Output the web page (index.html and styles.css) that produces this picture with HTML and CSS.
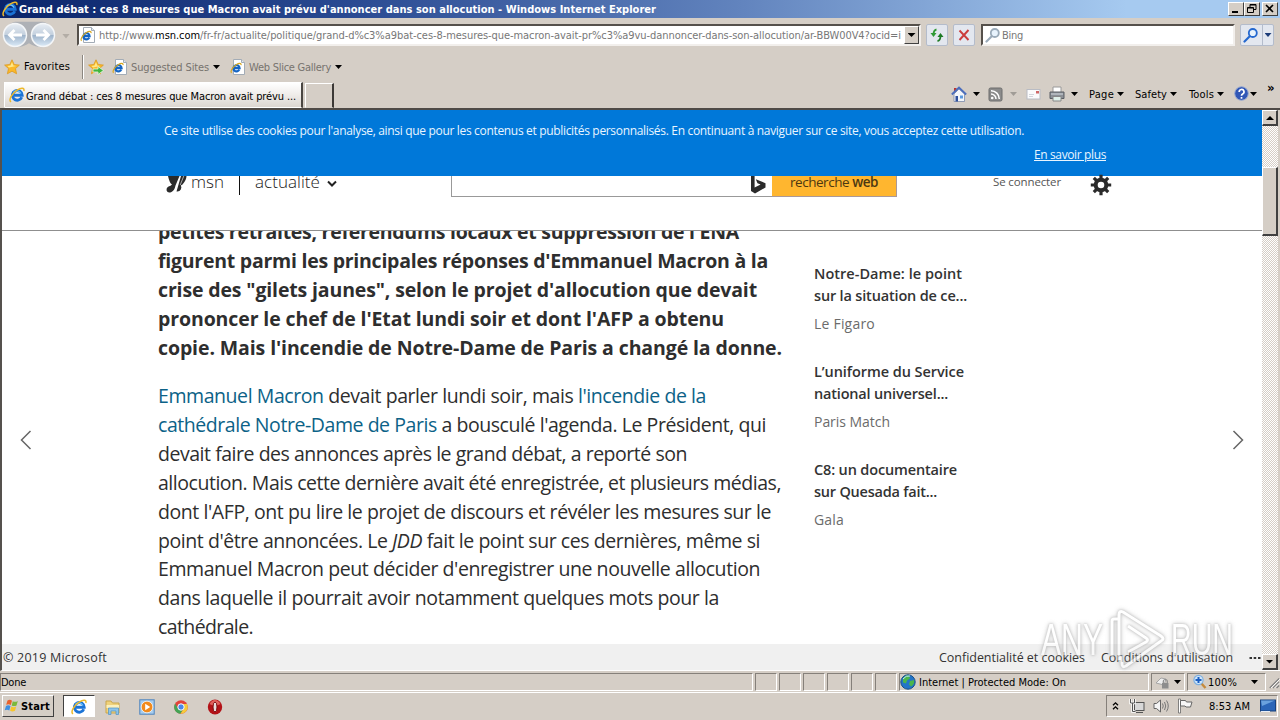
FILE: index.html
```html
<!DOCTYPE html>
<html lang="fr">
<head>
<meta charset="utf-8">
<title>Grand débat : ces 8 mesures que Macron avait prévu d'annoncer dans son allocution</title>
<link rel="stylesheet" href="styles.css">
</head>
<body>
<svg class="defs" aria-hidden="true">
  <defs>
    <symbol id="ie" viewBox="0 0 16 16">
      <path d="M12.8 10.3A4.900 4.900 0 1 1 13.200 8.300H5" fill="none" stroke="#1b73d6" stroke-width="2.900"/>
      <path d="M12 6.400A4.400 4.400 0 0 0 4.400 5.600" fill="none" stroke="#6cc4fa" stroke-width="1.300"/>
      <path d="M2 15C-.8 13 3 6 8.500 2.800 12 .5 15.800.3 14.800 4" fill="none" stroke="#edb92a" stroke-width="1.500"/>
    </symbol>
    <symbol id="iepage" viewBox="0 0 16 16">
      <path d="M3.500.5h8l3 3v12h-11z" fill="#fff" stroke="#a3acb6"/>
      <path d="M11.500.5v3h3" fill="#dfe8f2" stroke="#a3acb6"/>
      <path d="M9.300 10.600A3.100 3.100 0 1 1 9.600 9.200H4" fill="none" stroke="#1565c4" stroke-width="2.200"/>
      <path d="M1.500 13.800C0 12 3 7.500 6.500 5.500 9 4 11.500 4 11 6.200" fill="none" stroke="#d9a820" stroke-width="1.200"/>
    </symbol>
    <symbol id="star" viewBox="0 0 16 16">
      <path d="M8 .8l2.200 4.700 5.200.6-3.900 3.500 1.100 5.200L8 12.200l-4.600 2.600 1.100-5.200L.6 6.100l5.200-.6z" fill="#fbb829" stroke="#dc9a22" stroke-width=".8"/>
      <path d="M8 3l1.300 3.500 3 .5L5 8.500 3.500 7l3-.5z" fill="#ffe98a"/>
    </symbol>
    <symbol id="lens" viewBox="0 0 16 16">
      <path d="M6.500 9.500L1.500 14.500" stroke="currentColor" stroke-width="2.200" stroke-linecap="round"/>
      <circle cx="9.800" cy="6" r="4" fill="#e8f3fd" stroke="currentColor" stroke-width="1.800"/>
    </symbol>
    <linearGradient id="orb" x1="0" y1="0" x2="0" y2="1">
      <stop offset="0" stop-color="#e9eef4"/><stop offset=".48" stop-color="#c3d0de"/>
      <stop offset=".52" stop-color="#9fb4cb"/><stop offset="1" stop-color="#dcebf8"/>
    </linearGradient>
  </defs>
</svg>

<header class="titlebar">
  <svg class="i16"><use href="#ie"/></svg>
  <span class="title" data-w="637">Grand débat : ces 8 mesures que Macron avait prévu d'annoncer dans son allocution - Windows Internet Explorer</span>
  <div class="winbtns">
    <span class="wb"><svg viewBox="0 0 14 12"><path d="M3 9h6" stroke="#000" stroke-width="2"/></svg></span>
    <span class="wb"><svg viewBox="0 0 14 12"><path d="M5 4V1.500h6v5H9M5 2h6" fill="none" stroke="#000"/><path d="M2.500 4.500h6v5h-6zM2.500 5h6" fill="none" stroke="#000"/></svg></span>
    <span class="wb close"><svg viewBox="0 0 14 12"><path d="M3 2l7 7M10 2l-7 7" stroke="#000" stroke-width="1.600"/></svg></span>
  </div>
</header>

<nav class="navbar">
  <svg class="orbs" viewBox="0 0 56 28">
    <path d="M14 .8h28a13 13 0 0 1 0 25.500q-8 0-14-4-6 4-14 4A13 13 0 0 1 14 .8z" fill="#aeb1b6"/>
    <circle cx="14" cy="14" r="11.500" fill="url(#orb)" stroke="#f4f6f8" stroke-width="1.500"/>
    <circle cx="42" cy="14" r="11.500" fill="url(#orb)" stroke="#f4f6f8" stroke-width="1.500"/>
    <path d="M21 14H9M13.500 9l-5 5 5 5" fill="none" stroke="#fff" stroke-width="2.800"/>
    <path d="M35 14h12M42.500 9l5 5-5 5" fill="none" stroke="#fff" stroke-width="2.800"/>
  </svg>
  <i class="caret pale"></i>
  <div class="field address">
    <svg class="i16"><use href="#iepage"/></svg>
    <span class="url" data-w="802">http://www.<b>msn.com</b>/fr-fr/actualite/politique/grand-d%c3%a9bat-ces-8-mesures-que-macron-avait-pr%c3%a9vu-dannoncer-dans-son-allocution/ar-BBW00V4?ocid=i</span>
    <span class="drop"><i class="caret big"></i></span>
  </div>
  <span class="glass"><svg class="i16" viewBox="0 0 16 16"><path d="M7.500 2.500Q4.500 3 4.500 8" fill="none" stroke="#2f9a35" stroke-width="1.800"/><path d="M1.500 6h6l-3 4z" fill="#2f9a35"/><path d="M8.500 14Q11.500 13.500 11.500 9" fill="none" stroke="#1d7a24" stroke-width="1.800"/><path d="M8.500 10h6l-3-4z" fill="#1d7a24"/></svg></span>
  <span class="glass"><svg class="i16" viewBox="0 0 16 16"><path d="M3.500 3.500l9 9.500M12.500 3l-9 10" stroke="#cb3d3d" stroke-width="1.900"/></svg></span>
  <div class="field search">
    <svg class="i16 grey"><use href="#lens"/></svg>
    <span data-w="21">Bing</span>
  </div>
  <span class="glass go"><svg class="i16 blue"><use href="#lens"/></svg><span class="split"><i class="caret navy"></i></span></span>
</nav>

<nav class="favbar">
  <svg class="i16"><use href="#star"/></svg>
  <span class="fav" data-w="46">Favorites</span>
  <i class="sep"></i>
  <svg class="i16" viewBox="0 0 16 16"><use href="#star"/><path d="M5 10h5V7.500l5.500 4-5.500 4V13H5z" fill="#42b53e" stroke="#e7f7e0" stroke-width=".8"/></svg>
  <svg class="i16"><use href="#iepage"/></svg>
  <span class="dim" data-w="78">Suggested Sites</span><i class="caret"></i>
  <svg class="i16"><use href="#iepage"/></svg>
  <span class="dim" data-w="82">Web Slice Gallery</span><i class="caret"></i>
</nav>

<div class="tabrow">
  <div class="tab"><svg class="i16"><use href="#ie"/></svg><span data-w="270">Grand débat : ces 8 mesures que Macron avait prévu ...</span></div>
  <div class="newtab"></div>
  <div class="cmdbar">
    <svg class="i16" viewBox="0 0 16 16"><path d="M3 2h2.500v4H3z" fill="#b33"/><path d="M3 8v7.500h10.500V8L8 3z" fill="#f3f6fb" stroke="#7b8cab" stroke-width=".8"/><path d="M.8 8.500L8 1.500l7.200 7" fill="none" stroke="#4a6dbd" stroke-width="1.800"/><path d="M4.500 10h2.500v5.500H4.500z" fill="#2d4f9c"/><path d="M9 9.500h3v3H9z" fill="#5c9ade"/></svg>
    <i class="caret"></i>
    <svg class="i16" viewBox="0 0 16 16"><rect x="1" y="2" width="13" height="13" rx="1.500" fill="#8b8b8b" stroke="#6d6d6d"/><circle cx="4.200" cy="12" r="1.300" fill="#fff"/><path d="M3 8a5 5 0 0 1 5 5M3 4.700A8.300 8.300 0 0 1 11.300 13" fill="none" stroke="#fff" stroke-width="1.500"/></svg>
    <i class="caret pale"></i>
    <svg class="i16" viewBox="0 0 16 16"><rect x="1" y="3.500" width="13" height="9.500" fill="#fbfbfc" stroke="#b9bcc4"/><path d="M3 8.500h5M3 10.500h4" stroke="#d2d5dc"/><path d="M10 5h3v2.500h-3z" fill="#cf6767"/></svg>
    <svg class="i16" viewBox="0 0 16 16"><path d="M4 1h8v6H4z" fill="#fff" stroke="#999"/><path d="M1 6h14v6.500H1z" fill="#8b9097" stroke="#5a5e64"/><path d="M2 8h12" stroke="#d5dadf"/><path d="M4 10.500h8V15H4z" fill="#dff0ea" stroke="#888"/></svg>
    <i class="caret"></i>
    <span data-w="25">Page</span><i class="caret"></i>
    <span data-w="32">Safety</span><i class="caret"></i>
    <span data-w="25">Tools</span><i class="caret"></i>
    <svg class="i16" viewBox="0 0 16 16"><circle cx="7.500" cy="7.500" r="6.800" fill="#3157b6" stroke="#98a9d0"/><path d="M5.200 6a2.400 2.400 0 1 1 3.400 2q-1.100.6-1.100 1.700M7.500 11v1.800" fill="none" stroke="#fff" stroke-width="1.700"/></svg>
    <i class="caret"></i>
    <b class="more">»</b>
  </div>
</div>

<div class="viewport">
  <main class="page">
    <section class="cookie">
      <p><span data-w="860">Ce site utilise des cookies pour l'analyse, ainsi que pour les contenus et publicités personnalisés. En continuant à naviguer sur ce site, vous acceptez cette utilisation.</span></p>
      <p class="learn"><a data-w="72">En savoir plus</a></p>
    </section>
    <section class="msnbar">
      <svg class="butterfly" viewBox="0 0 22 18"><path d="M2 0h11.500L9.500 9.500Q8.500 14.500 5.500 16 1.500 17.500.6 14.500 0 11 4.500 9.800L6 8.500Q3.500 7 2 0z" fill="#2b2b2b"/><path d="M15 0h5.500Q20.500 4 16.500 8.500l-1.700 1Q16 11 14.800 13.500 13.500 16 10.500 15.500z" fill="#2b2b2b"/><path d="M17.800 0l-3.600 9" stroke="#fff" stroke-width=".6"/></svg>
      <span class="brand" data-w="33">msn</span>
      <i class="rule"></i>
      <span class="brand" data-w="65">actualité</span>
      <svg class="chev" viewBox="0 0 10 8"><path d="M1 1.500l4 4 4-4" fill="none" stroke="#222" stroke-width="2"/></svg>
      <div class="msnsearch"><svg viewBox="0 0 16 18"><path d="M1 0h3.600v11.500l6-3L7.500 7.200 5.800 3.200l9.700 4v4.300L5 17.500 1 15z" fill="#2b2b2b"/></svg></div>
      <div class="webbtn"><span data-w="88">recherche <b>web</b></span></div>
      <span class="signin" data-w="68">Se connecter</span>
      <svg class="gear" viewBox="0 0 22 22"><g fill="none" stroke="#2b2b2b"><circle cx="11" cy="11" r="5.300" stroke-width="4"/><path d="M11 .8v4M11 17.200v4M.8 11h4M17.200 11h4M3.800 3.800l2.800 2.800M15.400 15.400l2.800 2.800M3.800 18.200l2.800-2.800M15.400 6.600l2.800-2.800" stroke-width="3.200"/></g></svg>
    </section>
    <section class="body">
      <svg class="arrow" viewBox="0 0 12 20"><path d="M10.500 1L1.500 10l9 9" fill="none" stroke="#666" stroke-width="1.500"/></svg>
      <article>
        <p class="lead">
          <span data-w="581">petites retraites, référendums locaux et suppression de l'ENA</span>
          <span data-w="610">figurent parmi les principales réponses d'Emmanuel Macron à la</span>
          <span data-w="599">crise des "gilets jaunes", selon le projet d'allocution que devait</span>
          <span data-w="566">prononcer le chef de l'Etat lundi soir et dont l'AFP a obtenu</span>
          <span data-w="624">copie. Mais l'incendie de Notre-Dame de Paris a changé la donne.</span>
        </p>
        <p class="text">
          <span data-w="548"><a>Emmanuel Macron</a> devait parler lundi soir, mais <a>l'incendie de la</a></span>
          <span data-w="608"><a>cathédrale Notre-Dame de Paris</a> a bousculé l'agenda. Le Président, qui</span>
          <span data-w="529">devait faire des annonces après le grand débat, a reporté son</span>
          <span data-w="623">allocution. Mais cette dernière avait été enregistrée, et plusieurs médias,</span>
          <span data-w="613">dont l'AFP, ont pu lire le projet de discours et révéler les mesures sur le</span>
          <span data-w="602">point d'être annoncées. Le <em>JDD</em> fait le point sur ces dernières, même si</span>
          <span data-w="602">Emmanuel Macron peut décider d'enregistrer une nouvelle allocution</span>
          <span data-w="561">dans laquelle il pourrait avoir notamment quelques mots pour la</span>
          <span data-w="95">cathédrale.</span>
        </p>
      </article>
      <aside>
        <div class="story"><b data-w="148">Notre-Dame: le point</b><b data-w="153">sur la situation de ce...</b><small data-w="61">Le Figaro</small></div>
        <div class="story"><b data-w="150">L’uniforme du Service</b><b data-w="134">national universel...</b><small data-w="76">Paris Match</small></div>
        <div class="story"><b data-w="143">C8: un documentaire</b><b data-w="123">sur Quesada fait...</b><small data-w="30">Gala</small></div>
      </aside>
      <svg class="arrow" viewBox="0 0 12 20"><path d="M1.500 1l9 9-9 9" fill="none" stroke="#666" stroke-width="1.500"/></svg>
    </section>
    <footer class="pagefoot">
      <span data-w="104">© 2019 Microsoft</span>
      <span class="push" data-w="146">Confidentialité et cookies</span>
      <span data-w="132">Conditions d'utilisation</span>
      <svg class="dots" viewBox="0 0 12 4"><path d="M.5 2h2.500M4.700 2h2.500M9 2h2.500" stroke="#333" stroke-width="2.200"/></svg>
    </footer>
    <svg class="watermark" viewBox="0 0 200 70">
      <text x="5" y="49" textLength="62" lengthAdjust="spacingAndGlyphs">ANY</text><text x="135" y="49" textLength="62" lengthAdjust="spacingAndGlyphs">RUN</text>
      <path d="M76 50V15q0-2 2-2h4M83 54V9q0-5 4-3l38 24q4 3 0 5L90 60q-4 2-4-2v-8M92 20l18 12q3 2 0 4L92 46"/>
    </svg>
  </main>
  <div class="scroll">
    <span class="sbtn"><i class="caret big up"></i></span>
    <span class="thumb"></span>
    <span class="sbtn last"><i class="caret big"></i></span>
  </div>
</div>

<div class="status">
  <span class="cell"><span data-w="25">Done</span></span>
  <span class="cell"></span><span class="cell"></span><span class="cell"></span><span class="cell"></span><span class="cell"></span><span class="cell"></span>
  <span class="cell zone"><svg class="i16" viewBox="0 0 16 16"><circle cx="8" cy="8" r="7.200" fill="#2275c8" stroke="#1b5087"/><path d="M3 4q3-3.500 6-2.500l1 3-3 2-1 3-3-1zM10 7l4-1q1 4-3 6.500l-2-2z" fill="#4cb64a"/><path d="M3 5q3-4 7-3" stroke="#bfe6ff" fill="none"/></svg><span data-w="147">Internet | Protected Mode: On</span></span>
  <span class="cell lock"><svg class="i16" viewBox="0 0 16 16"><path d="M1 9l5-5 5 1-2 6z" fill="#eee" stroke="#a5a5a5"/><rect x="7" y="9" width="6.500" height="5.500" fill="#8d8d8d"/><path d="M8.300 9V7.500a2 2 0 0 1 4 0V9" fill="none" stroke="#8d8d8d" stroke-width="1.200"/></svg><i class="caret"></i></span>
  <span class="cell zoom"><svg class="i16" viewBox="0 0 16 16"><path d="M9 9l4.500 5" stroke="#c58a3c" stroke-width="2.400"/><circle cx="6.500" cy="6" r="4.600" fill="#cfe6fb" stroke="#7fb0e0" stroke-width="1.200"/><path d="M6.500 3v6M3.500 6h6" stroke="#1c5fc2" stroke-width="2"/></svg><span data-w="29">100%</span><i class="caret"></i></span>
  <svg class="grip" viewBox="0 0 14 16"><path d="M2 15L13 4M6 15l7-7M10 15l3-3" stroke="#808080" stroke-width="1.500"/><path d="M3.500 15L14 4.500M7.500 15L14 8.500" stroke="#fff"/></svg>
</div>

<div class="taskbar">
  <div class="start"><svg class="i16" viewBox="0 0 16 16"><path d="M3.500 2.500Q6 1 8 2.700L6.800 7Q4.700 5.600 2.200 6.800z" fill="#e8622c"/><path d="M8.800 3.200q2.200 1.400 5-.2L12.500 7.400q-2.400 1.300-4.800 0z" fill="#7cb93c"/><path d="M2 7.900q2.400-1.200 4.500.2L5.300 12.400Q3.200 11 .7 12.200z" fill="#3e8fe0"/><path d="M7.300 8.500q2.400 1.300 4.900 0L11 12.800q-2.600 1.300-4.900 0z" fill="#f6c52e"/></svg><b data-w="29">Start</b></div>
  <div class="task active"><svg class="i16"><use href="#ie"/></svg></div>
  <div class="task"><svg class="i16" viewBox="0 0 16 16"><path d="M1 2h5l1.500 2H14v10H1z" fill="#efd27c" stroke="#c9a64c"/><path d="M1.500 6h12.500v3H1.500z" fill="#fbf0bd"/><path d="M3.500 15.500V9h10v6.500h-2.500v-3.500H6v3.500z" fill="#8cc3ea" stroke="#4f93c6" stroke-width=".7"/></svg></div>
  <div class="task"><svg class="i16" viewBox="0 0 16 16"><rect x=".8" y=".8" width="14.400" height="14.400" fill="#a7cdef" stroke="#4d84bd"/><circle cx="8" cy="8" r="5.800" fill="#f18a1d" stroke="#fff" stroke-width=".7"/><path d="M6.200 4.800l5 3.200-5 3.200z" fill="#fff"/></svg></div>
  <div class="task"><svg class="i16" viewBox="0 0 16 16"><circle cx="8" cy="8" r="6.800" fill="#e2433a"/><path d="M2.100 4.600A6.800 6.800 0 0 0 7.500 14.800L10.500 9.500 5 9.500z" fill="#43a455"/><path d="M14 5H8l2.800 4.500-3.300 5.300A6.800 6.800 0 0 0 14 5z" fill="#f6cc3a"/><circle cx="8" cy="8" r="3.200" fill="#4b87ea" stroke="#fff" stroke-width="1"/></svg></div>
  <div class="task"><svg class="i16" viewBox="0 0 16 16"><ellipse cx="8" cy="8" rx="7.200" ry="7.400" fill="#b31217"/><path d="M2.500 5Q5 .8 8 1t5.500 4Q8 8 2.500 5z" fill="#e0605c"/><ellipse cx="8" cy="8" rx="2" ry="5" fill="#eadcdc" stroke="#7c0a0e"/></svg></div>
  <div class="tray">
    <svg class="hid" viewBox="0 0 7 10"><path d="M1 4.300l2.500-2.500L6 4.300M1 8.300l2.500-2.500L6 8.300" fill="none" stroke="#000" stroke-width="1.300"/></svg>
    <svg class="i16" viewBox="0 0 16 16"><rect x="5.500" y="4.500" width="9.500" height="8" fill="#d8d8d8" stroke="#555"/><path d="M7 14.500h7" stroke="#555"/><path d="M1.500 1v4h4V1M3.500 5v8.500h3" fill="none" stroke="#fff" stroke-width="2.400"/><path d="M1.500 1v4h4V1M3.500 5v8.500h3" fill="none" stroke="#555"/></svg>
    <svg class="i16" viewBox="0 0 16 16"><path d="M1 5.500h2.500L7.500 2v12L3.500 10.500H1z" fill="#f4f4f4" stroke="#666"/><path d="M9.500 5.500q1.500 2.500 0 5M11.500 4q2.500 4 0 8M13.500 2.500q3.500 5.500 0 11" fill="none" stroke="#777"/></svg>
    <svg class="i16" viewBox="0 0 16 16"><path d="M1.500 1h2v14h-2z" fill="#fff" stroke="#666" stroke-width=".8"/><path d="M3.500 2.500h5l1 1.500h5.500l-1.500 5H9L8 8H3.500z" fill="#f7f7f7" stroke="#666"/></svg>
    <span data-w="41">8:53 AM</span>
    <svg class="i16" viewBox="0 0 16 16"><rect x=".5" y="2" width="15" height="11" fill="#2b66b8" stroke="#17427f"/><path d="M1 2.500h14L2 8z" fill="#6aa2de"/><path d="M1 13.500h9" stroke="#e9eef5"/></svg>
  </div>
</div>
<script src="fit.js"></script>
</body>
</html>
```
FILE: styles.css
```css
* { box-sizing: border-box; }
body {
  margin: 0; width: 1280px; height: 720px; overflow: hidden;
  display: flex; flex-direction: column;
  background: #d5cec6; color: #000;
  font: 11px/14px "DejaVu Sans Condensed", "DejaVu Sans", sans-serif;
}
p { margin: 0; }
[data-w] { white-space: nowrap; flex: none; }
.defs { position: absolute; width: 0; height: 0; }
.i16 { width: 16px; height: 16px; flex: none; display: block; }
.caret {
  display: block; flex: none; width: 7px; height: 4px; background: #000;
  clip-path: polygon(0 0, 100% 0, 50% 100%);
}
.caret.big { width: 8px; height: 4px; }
.caret.up { transform: rotate(180deg); }
.caret.pale { background: #a09c96; }
.caret.navy { background: #1d3c78; }

/* Window title */
.titlebar {
  height: 18px; flex: none; display: flex; align-items: center; padding: 0 2px;
  background: linear-gradient(90deg, #0a246a 0%, #2b4b93 28%, #6284be 58%, #a6caf0 88%, #a6caf0 100%);
}
.title { color: #fff; font-weight: bold; margin-left: 1px; padding-top: 1px; }
.winbtns { margin-left: auto; display: flex; }
.wb {
  width: 16px; height: 14px; background: #d5cec6; border: 1px solid;
  border-color: #fff #404040 #404040 #fff;
}
.wb svg { width: 14px; height: 12px; display: block; }
.wb.close { margin-left: 2px; }

/* Navigation row */
.navbar { height: 36px; flex: none; display: flex; align-items: center; padding: 0 5px 2px 1px; }
.orbs { width: 56px; height: 28px; flex: none; }
.navbar > .caret.pale { width: 8px; height: 5px; margin: 2px 7px 0 5px; background: #b3ada6; }
.field {
  height: 22px; background: #fff; border: 2px solid;
  border-color: #55504b #f2efec #f2efec #55504b; display: flex; align-items: center; color: #777;
}
.address { width: 844px; padding-left: 1px; }
.url { margin-left: 3px; padding-top: 2px; }
.url b { font-weight: normal; color: #000; }
.drop {
  width: 15px; height: 18px; margin-left: auto; background: #d5cec6; border: 1px solid;
  border-color: #fff #404040 #404040 #fff; display: grid; place-items: center;
}
.glass {
  width: 22px; height: 22px; margin-left: 5px; border: 1px solid #b4bccb; border-radius: 2px;
  background: #e3e7ef; display: flex; align-items: center; justify-content: center; flex: none;
}
.search { width: 254px; margin-left: 6px; padding-left: 2px; }
.search span { margin-left: 1px; padding-top: 2px; }
.grey { color: #9aaab9; }
.blue { color: #2468cf; }
.go { width: 34px; margin-left: 5px; justify-content: flex-start; padding-left: 2px; }
.split { margin-left: 3px; width: 12px; height: 20px; border-left: 1px solid #b4bccb; display: grid; place-items: center; }

/* Favourites row */
.favbar {
  height: 26px; flex: none; display: grid; align-items: center; padding-left: 4px;
  grid-template-columns: 20px 58px 6px 24px 19px 82px 17px 19px 86px 10px;
}
.sep { width: 2px; height: 24px; border-left: 1px solid #8b8680; border-right: 1px solid #fff; }
.dim { color: #77736e; padding-top: 1px; }

/* Tab row */
.tabrow { height: 28px; flex: none; display: flex; padding-left: 4px; }
.tab {
  width: 299px; height: 26px; margin-top: 2px; padding-left: 4px; display: flex; align-items: center; gap: 1px;
  background: linear-gradient(#fff, #efece9 50%, #dcd6d0); border: 1px solid;
  border-color: #fff #4a4642 transparent #fff; border-right-width: 2px;
}
.tab span { padding-top: 3px; }
.newtab {
  width: 29px; height: 25px; margin: 3px 0 0 2px; border: 1px solid;
  border-color: #fff #3c3936 transparent #fff; border-right-width: 2px;
}
.cmdbar {
  margin-left: 617px; height: 28px; display: grid; align-items: center;
  grid-template-columns: 22px 15px 22px 16px 23px 22px 18px 28px 18px 35px 19px 28px 17px 16px 17px 13px;
}
.cmdbar span { padding-top: 1px; }
.more { font-size: 13px; margin-top: -13px; }

/* Document area */
.viewport { height: 563px; flex: none; display: flex; border-top: 2px solid #4e4a46; border-left: 2px solid #55514d; border-bottom: 1px solid #fff; }
.page {
  width: 1260px; position: relative; display: flex; flex-direction: column; background: #fff;
  font-family: "Open Sans", "Noto Sans", sans-serif; color: #333;
}
.cookie { height: 66px; flex: none; background: #0078d9; color: #e9f5ff; font-size: 12px; line-height: 24px; padding: 9px 156px 0 162px; }
.learn { text-align: right; }
.learn a { text-decoration: underline; }
.msnbar { height: 55px; flex: none; display: flex; align-items: flex-start; padding-left: 164px; border-bottom: 1px solid #8f8f8f; line-height: 12px; }
.butterfly { width: 22px; height: 18px; }
.brand { font-size: 17px; font-weight: 300; color: #222; margin-left: 3px; }
.rule { width: 1px; height: 19px; background: #111; margin: 0 12px 0 15px; }
.chev { width: 10px; height: 8px; margin: 4px 0 0 7px; }
.msnsearch { width: 321px; height: 21px; margin-left: 114px; border: 1px solid #999; border-width: 0 0 1px 1px; display: flex; justify-content: flex-end; padding-right: 6px; }
.msnsearch svg { width: 16px; height: 18px; }
.webbtn { width: 125px; height: 21px; background: #ffb62f; border: 1px solid #a99; border-width: 0 1px 1px 0; font-size: 13.500px; color: #4c3812; padding-left: 18px; }
.webbtn b { font-weight: 600; }
.signin { margin-left: 96px; font-size: 11.500px; color: #555; }
.gear { width: 22px; height: 22px; margin: -2px 0 0 29px; }
.body { height: 413px; flex: none; display: flex; overflow: hidden; }
.arrow { width: 12px; height: 20px; flex: none; margin: 199px 0 0 18px; }
article { width: 656px; margin: -14px 0 0 126px; flex: none; font-size: 19.500px; line-height: 28.900px; color: #2e2e2e; }
article span { display: table; }
article a { color: #0c6287; }
.lead { font-weight: bold; line-height: 29px; }
.text { margin-top: 20px; }
aside { width: 400px; padding-top: 32px; flex: none; }
.story { height: 98px; }
.story b, .story small { display: table; font-size: 14.500px; line-height: 22px; }
.story b { font-weight: 600; }
.story small { color: #6b6b6b; font-weight: 400; font-size: 14px; margin-top: 6px; }
.pagefoot { height: 26px; flex: none; display: flex; align-items: center; padding: 2px 0 0 1px; background: #f0f0f0; font-size: 12.500px; }
.push { margin: 0 16px 0 832px; }
.dots { width: 12px; height: 4px; margin-left: 16px; }
.watermark {
  position: absolute; left: 1034px; top: 496px; width: 200px; height: 70px; opacity: .6;
  filter: drop-shadow(0 0 1px #999) drop-shadow(0 0 2px #aaa);
}
.watermark text { font: 44px "Liberation Sans", sans-serif; fill: #fff; }
.watermark path { fill: none; stroke: #fff; stroke-width: 3; }

.scroll {
  width: 16px; display: flex; flex-direction: column;
  background: repeating-conic-gradient(#d5cec6 0 25%, #fff 0 50%) 0 0 / 2px 2px;
}
.sbtn, .thumb { background: #d5cec6; border: 1px solid; border-color: #fff #404040 #404040 #fff; border-width: 1px 2px 2px 1px; display: grid; place-items: center; }
.sbtn { height: 16px; }
.thumb { height: 69px; margin-top: 41px; }
.last { margin-top: auto; }

/* Status bar */
.status {
  height: 22px; flex: none; display: grid; align-items: stretch; padding: 2px 0 1px; border-bottom: 1px solid #fff;
  grid-template-columns: 755px 24px 24px 24px 24px 24px 24px 252px 36px 81px 12px;
}
.cell { border: 1px solid; border-color: #85807a #fff #fff #85807a; margin-right: 2px; display: flex; align-items: center; }
.cell > span { padding-top: 2px; }
.zone .i16 { margin: 0 3px 0 0; }
.lock .i16 { margin: 0 3px 0 3px; }
.zoom .i16 { margin-left: 4px; }
.zoom .caret { margin-left: 14px; }
.grip { width: 12px; height: 18px; }

/* Taskbar */
.taskbar { height: 25px; flex: none; display: flex; align-items: center; padding: 1px 2px; }
.start {
  width: 52px; height: 22px; border: 1px solid; border-color: #fff #404040 #404040 #fff; display: flex; align-items: center; padding-left: 1px;
  margin-right: 9px;
}
.start .i16 { margin-right: 1px; }
.start b, .tray span { padding-top: 2px; }
.task { width: 32px; height: 22px; margin-right: 2px; display: grid; place-items: center; border: 1px solid transparent; }
.task .i16 { position: relative; top: 1px; }
.active { background: #fff; border-color: #404040 #fff #fff #404040; }
.tray {
  width: 172px; height: 22px; margin-left: auto; border: 1px solid; border-color: #85807a #fff #fff #85807a;
  display: grid; align-items: center; padding-left: 5px;
  grid-template-columns: 17px 24px 24px 32px 51px 16px;
}
.hid { width: 7px; height: 10px; }
```
FILE: fit.js
```js
// Tracks each label so that it occupies its nominal width.
document.querySelectorAll('[data-w]').forEach(function (el) {
  var range = document.createRange();
  range.selectNodeContents(el);
  var natural = range.getBoundingClientRect().width;
  var count = el.textContent.length;
  el.style.letterSpacing = ((Number(el.dataset.w) - natural) / count) + 'px';
});
```
